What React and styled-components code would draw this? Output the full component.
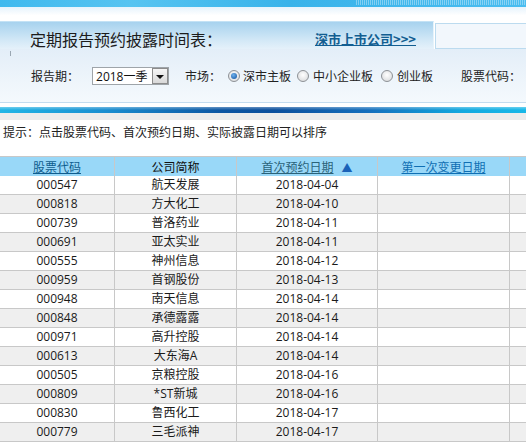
import React from "react";
import styled, { createGlobalStyle } from "styled-components";

const Global = createGlobalStyle`
  html, body { margin: 0; padding: 0; background: #fff; overflow: hidden; }
  body { font-family: "Open Sans", "Noto Sans CJK SC", sans-serif; font-size: 12px; color: #222; }
`;

const Page = styled.div`
  width: 526px;
  overflow: hidden;
`;

const TopStrip = styled.div`
  height: 7px;
  background:
    repeating-linear-gradient(90deg, rgba(255,255,255,0.35) 0 1px, transparent 1px 2px) right top / 170px 5px no-repeat,
    linear-gradient(90deg, #3fb9ee 0%, #56c4f1 25%, #38b3ea 55%, #4abdf0 100%);
`;

const WhiteBand = styled.div`
  height: 14px;
  background: linear-gradient(#e6f3fc, #ffffff 60%);
`;

const TabRow = styled.div`
  display: flex;
  height: 28px;
`;

const Tab = styled.div`
  width: 434px;
  box-sizing: border-box;
  display: flex;
  align-items: center;
  padding: 6px 17px 0 30px;
  background: linear-gradient(#a7d2ee, #d4e9f7 70%, #e5f1fa);
  border-top: 1px solid #c4e2f5;
  border-right: 1px solid #e6f3fb;
`;

const Title = styled.div`
  font-family: "Noto Sans CJK SC", sans-serif;
  font-size: 16px;
  color: #1c1c1c;
`;

const MoreLink = styled.a`
  margin-left: auto;
  font-family: "Noto Sans CJK SC", sans-serif;
  font-size: 13px;
  font-weight: bold;
  color: #125e91;
  text-decoration: underline;
  cursor: pointer;
`;

const SideBox = styled.div`
  flex: 1;
  margin: 2px 0 0 1px;
  border: 1px solid #bcdbef;
  border-right: none;
  background: #f2f7fc;
`;

const FormArea = styled.div`
  position: relative;
  height: 54px;
  box-sizing: border-box;
  display: flex;
  align-items: center;
  padding-left: 31px;
  background: linear-gradient(#e3eef8, #eef5fb 60%, #f4f9fd);
  border-bottom: 1px solid #c4dcef;
  font-family: "Noto Sans CJK SC", sans-serif;
  white-space: nowrap;
`;

const Tick = styled.span`
  position: absolute;
  left: 10px;
  top: 2px;
  width: 1px;
  height: 5px;
  background: #9aa7b2;
`;

const Label = styled.span`
  margin-left: ${(p) => p.$ml || 0}px;
  font-size: 12px;
  color: #222;
`;

const Select = styled.div`
  margin-left: ${(p) => p.$ml || 0}px;
  width: 77px;
  height: 18px;
  box-sizing: border-box;
  border: 1px solid #9ea4a9;
  background: #fff;
  display: flex;
  align-items: center;
  padding-left: 3px;
  font-family: "Open Sans", "Noto Sans CJK SC", sans-serif;
  font-size: 12px;
  color: #111;
`;

const SelectText = styled.span`
  flex: 1;
`;

const SelectBtn = styled.span`
  width: 16px;
  height: 16px;
  box-sizing: border-box;
  border: 1px solid #8c8c8c;
  background: linear-gradient(#f6f6f6, #d9d9d9);
  display: flex;
  align-items: center;
  justify-content: center;
  &::after {
    content: "";
    border-left: 4px solid transparent;
    border-right: 4px solid transparent;
    border-top: 4px solid #111;
    margin-top: 2px;
  }
`;

const Radio = styled.span`
  margin-left: ${(p) => p.$ml || 0}px;
  width: 12px;
  height: 12px;
  box-sizing: border-box;
  border-radius: 50%;
  border: 1px solid #8d9196;
  background: radial-gradient(circle at 50% 40%, #ffffff, #d4d6d8);
  display: inline-flex;
  align-items: center;
  justify-content: center;
  &::after {
    content: "";
    display: ${(p) => (p.$checked ? "block" : "none")};
    width: 6px;
    height: 6px;
    border-radius: 50%;
    background: radial-gradient(circle at 40% 35%, #6fb2ee, #0f4f9c);
  }
`;

const WhiteGap = styled.div`
  height: 4px;
  background: #fff;
`;

const BlueBar = styled.div`
  height: 6px;
  background:
    linear-gradient(rgba(255,255,255,0.35), rgba(255,255,255,0) 50%),
    linear-gradient(90deg, #22b6e6 0%, #1a8ed0 20%, #0d56a2 42%, #0c4f9c 52%, #166fbc 70%, #13a9df 88%, #19b8e8 100%);
`;

const GrayBand = styled.div`
  height: 7px;
  background: #ececec;
`;

const Hint = styled.div`
  height: 36px;
  box-sizing: border-box;
  padding: 3px 0 0 3px;
  font-family: "Noto Sans CJK SC", sans-serif;
  font-size: 12px;
  line-height: 18px;
  color: #222;
`;

const Grid = styled.div`
  width: 600px;
  border-top: 1px solid #c8c8c8;
`;

const Row = styled.div`
  display: grid;
  grid-template-columns: 115px 122px 141px 132px 90px;
  background: ${(p) => p.$bg};
`;

const Cell = styled.div`
  height: ${(p) => (p.$head ? 19 : 18)}px;
  line-height: ${(p) => (p.$head ? 19 : 18)}px;
  border-right: 1px solid #c8c8c8;
  border-bottom: ${(p) => (p.$head ? "none" : "1px solid #c8c8c8")};
  text-align: center;
  font-family: "Open Sans", "Noto Sans CJK SC", sans-serif;
  font-size: 12px;
  color: #1a1a1a;
  white-space: nowrap;
  overflow: hidden;
`;

const HeadLink = styled.a`
  color: ${(p) => p.$color};
  text-decoration: underline;
  font-family: "Noto Sans CJK SC", sans-serif;
  cursor: pointer;
`;

const HeadText = styled.span`
  font-family: "Noto Sans CJK SC", sans-serif;
  color: #111;
`;

const SortArrow = styled.span`
  margin-left: 8px;
  color: #1a62b8;
  font-size: 11px;
`;

const rows = [
  ["000547", "航天发展", "2018-04-04"],
  ["000818", "方大化工", "2018-04-10"],
  ["000739", "普洛药业", "2018-04-11"],
  ["000691", "亚太实业", "2018-04-11"],
  ["000555", "神州信息", "2018-04-12"],
  ["000959", "首钢股份", "2018-04-13"],
  ["000948", "南天信息", "2018-04-14"],
  ["000848", "承德露露", "2018-04-14"],
  ["000971", "高升控股", "2018-04-14"],
  ["000613", "大东海A", "2018-04-14"],
  ["000505", "京粮控股", "2018-04-16"],
  ["000809", "*ST新城", "2018-04-16"],
  ["000830", "鲁西化工", "2018-04-17"],
  ["000779", "三毛派神", "2018-04-17"],
];

export default function App() {
  return (
    <Page>
      <Global />
      <TopStrip />
      <WhiteBand />
      <TabRow>
        <Tab>
          <Title>定期报告预约披露时间表：</Title>
          <MoreLink>深市上市公司&gt;&gt;&gt;</MoreLink>
        </Tab>
        <SideBox />
      </TabRow>
      <FormArea>
        <Tick />
        <Label>报告期：</Label>
        <Select $ml={13}>
          <SelectText>2018一季</SelectText>
          <SelectBtn />
        </Select>
        <Label $ml={16}>市场：</Label>
        <Radio $ml={7} $checked />
        <Label $ml={3}>深市主板</Label>
        <Radio $ml={6} />
        <Label $ml={4}>中小企业板</Label>
        <Radio $ml={8} />
        <Label $ml={4}>创业板</Label>
        <Label $ml={28}>股票代码：</Label>
      </FormArea>
      <WhiteGap />
      <BlueBar />
      <GrayBand />
      <Hint>提示：点击股票代码、首次预约日期、实际披露日期可以排序</Hint>
      <Grid>
        <Row $bg="#99d8f8">
          <Cell $head><HeadLink $color="#0f5d8e">股票代码</HeadLink></Cell>
          <Cell $head><HeadText>公司简称</HeadText></Cell>
          <Cell $head>
            <HeadLink $color="#2a6279">首次预约日期</HeadLink>
            <SortArrow>▲</SortArrow>
          </Cell>
          <Cell $head><HeadLink $color="#0f6fb3">第一次变更日期</HeadLink></Cell>
          <Cell $head />
        </Row>
        {rows.map((r, i) => (
          <Row key={r[0]} $bg={i % 2 ? "#efefef" : "#ffffff"}>
            <Cell>{r[0]}</Cell>
            <Cell>{r[1]}</Cell>
            <Cell>{r[2]}</Cell>
            <Cell />
            <Cell />
          </Row>
        ))}
      </Grid>
    </Page>
  );
}
